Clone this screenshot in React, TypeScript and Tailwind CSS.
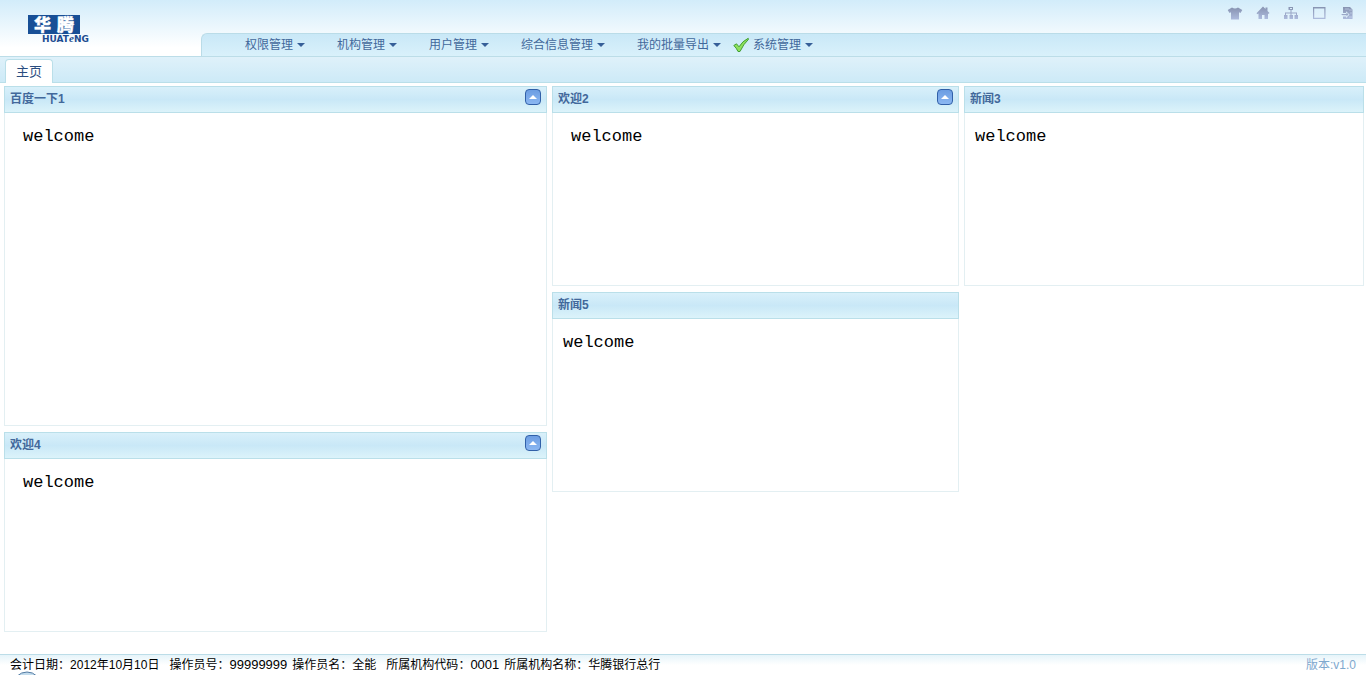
import type { ReactNode } from "react";

const menus = [
  { label: "权限管理" },
  { label: "机构管理" },
  { label: "用户管理" },
  { label: "综合信息管理" },
  { label: "我的批量导出" },
  { label: "系统管理", checked: true },
];

function Logo() {
  return (
    <a href="#" aria-label="华腾 HUATENG" className="ml-7 mt-[15px] block h-7 w-[68px]">
      <svg viewBox="0 0 68 28" className="h-7 w-[68px] overflow-visible" aria-hidden="true">
        <rect x="0" y="0" width="52" height="19" fill="#184f96" />
        <g fontSize="17" fontWeight="900" fill="#fff" stroke="#fff" strokeWidth="0.4" fontFamily="'Noto Sans CJK SC', sans-serif">
          <text x="6" y="15.500">华</text>
          <text x="29" y="15.500">腾</text>
        </g>
        <text x="14" y="26.500" fill="#1d4c91" fontWeight="bold" fontSize="9" fontFamily="'DejaVu Sans', sans-serif">
          HUAT<tspan fontSize="11" fontStyle="italic" fontFamily="'Liberation Serif', serif">e</tspan>NG
        </text>
      </svg>
    </a>
  );
}

function ToolButton({ label, children }: { label: string; children: ReactNode }) {
  return (
    <button type="button" aria-label={label} className="size-4 cursor-pointer">
      <svg viewBox="0 0 16 16" className="size-4" fill="url(#tool)" aria-hidden="true">
        {children}
      </svg>
    </button>
  );
}

function Tools() {
  return (
    <div className="flex gap-3 pr-[11px] pt-[5px]">
      <svg className="absolute size-0" aria-hidden="true">
        <defs>
          <linearGradient id="tool" x1="0" y1="0" x2="0" y2="1">
            <stop offset="0" stopColor="#8793b1" />
            <stop offset="1" stopColor="#adbbdd" />
          </linearGradient>
        </defs>
      </svg>
      <ToolButton label="皮肤">
        <path d="M5 2.500Q8 4.500 11 2.500L15.300 5 13.500 8 12 7.200V14.500H4V7.200L2.500 8 .700 5Z" />
      </ToolButton>
      <ToolButton label="首页">
        <path d="M8 1.500 10.500 4V2.500H12.500V6L14.500 8 13.500 9 13 8.500V14H9.500V10H7V14H3.500V8.500L2.500 9.300 1.500 8.300Z" />
      </ToolButton>
      <ToolButton label="机构">
        <path d="M5.500 2H10V5H8.500V7.500H14V10H15V14H11.500V10H13V8.500H8.500V10H10V14H6.500V10H7.500V8.500H3V10H4.500V14H1V10H2V7.500H7.500V5H5.500ZM7 3V4H9V3Z" fillRule="evenodd" />
      </ToolButton>
      <ToolButton label="全屏">
        <path d="M2 2H14.500V14H2ZM3.200 3.500V12.800H13.300V3.500Z" fillRule="evenodd" />
      </ToolButton>
      <ToolButton label="退出">
        <path d="M4 2H11L13.500 4.500V14H4V11.500H7V13L10.500 9.500 7 6.200V8H4Z" />
        <path d="M2 9H7.500V7.500L9.500 9.600 7.500 11.500V10.300H3.500Z" />
        <path d="M6 4H10M10 5H13M11 8H13M10 12H13" stroke="#d8e7f8" strokeWidth=".5" fill="none" />
      </ToolButton>
    </div>
  );
}

function CheckMark() {
  return (
    <svg viewBox="0 0 16 16" className="size-4" aria-hidden="true">
      <path d="M.800 8.500 3.500 6.800 6 9.800Q9.500 4 15.200 1.300L15.600 2.200Q10.500 7 7 14.500L5 14.500Q3.500 11 .800 8.500Z" fill="#8ee05e" stroke="#379629" strokeWidth=".9" strokeLinejoin="round" />
    </svg>
  );
}

function Panel({ title, size, collapsible, inset }: { title: string; size: "tall" | "short"; collapsible?: boolean; inset?: boolean }) {
  return (
    <section className={`flex flex-col border border-[#e3eff2] ${size === "tall" ? "h-[340px]" : "h-[200px]"}`}>
      <header className="-m-px flex h-[27px] shrink-0 items-start justify-between border border-[#badfe9] bg-linear-to-b from-[#d9f0fa] via-[#c9e8f7] to-[#dcf3fa] pl-[5px] pr-[5px] pt-[2px]">
        <h2 className="text-[12px]/[20px] font-bold text-[#42689b]">{title}</h2>
        {collapsible && (
          <button type="button" aria-label={`折叠 ${title}`} className="flex size-4 cursor-pointer items-center justify-center rounded-[4px] border border-[#3160a8] bg-linear-to-b from-[#6c9de2] to-[#8bb7f2]">
            <svg viewBox="0 0 8 4" className="h-1 w-2" aria-hidden="true">
              <path d="M0 4 4 0 8 4Z" fill="#fff" />
            </svg>
          </button>
        )}
      </header>
      <p className={`pt-[13px] font-['Liberation_Mono',monospace] text-[17px]/[24px] text-black ${inset ? "pl-[18px]" : "pl-[10px]"}`}>welcome</p>
    </section>
  );
}

function Field({ label, value, numeric }: { label: string; value: string; numeric?: boolean }) {
  return (
    <div className={`flex ${numeric ? "pr-[5px]" : "pr-[10px]"}`}>
      <dt>{label}：</dt>
      <dd className={numeric ? "text-[13px]" : ""}>{value}</dd>
    </div>
  );
}

export default function App() {
  return (
    <div className="flex min-h-screen flex-col bg-white font-['Liberation_Sans','Noto_Sans_CJK_SC',sans-serif] text-[12px]">
      <header className="flex h-[57px] border-b border-[#bcdde8] bg-linear-to-b from-[#d2ecfa] to-white to-85%">
        <div className="w-[201px] shrink-0">
          <Logo />
        </div>
        <div className="flex min-w-0 flex-1 flex-col items-end justify-between">
          <Tools />
          <nav className="flex h-[23px] w-full rounded-tl-md border-l border-t border-[#badce8] bg-linear-to-b from-[#c9e8f7] to-[#d9f1fb] pl-[23px]">
            {menus.map((m) => (
              <button type="button" key={m.label} className="flex shrink-0 cursor-pointer items-center pr-3 text-[12px]/[20px] text-[#42689b]">
                <span className="flex w-5">{m.checked && <CheckMark />}</span>
                {m.label}
                <svg viewBox="0 0 8 4" className="ml-1 h-1 w-2" aria-hidden="true">
                  <path d="M0 0H8L4 4Z" fill="#365f98" />
                </svg>
              </button>
            ))}
          </nav>
        </div>
      </header>
      <div role="tablist" className="flex h-[26px] items-end border-b border-[#badfe9] bg-linear-to-b from-[#dff1fa] to-[#cdeaf7] pl-[5px]">
        <button type="button" role="tab" aria-selected="true" className="-mb-px h-6 w-12 cursor-pointer rounded-t-[4px] border border-b-0 border-[#badfe9] bg-white text-[13px]/[22px] text-[#2a4d80]">
          主页
        </button>
      </div>
      <main className="grid flex-1 grid-cols-[543fr_407fr_400fr] items-start gap-[5px] pb-5 pl-1 pr-[2px] pt-[3px]">
        <div className="flex flex-col gap-[6px]">
          <Panel title="百度一下1" size="tall" collapsible inset />
          <Panel title="欢迎4" size="short" collapsible inset />
        </div>
        <div className="flex flex-col gap-[6px]">
          <Panel title="欢迎2" size="short" collapsible inset />
          <Panel title="新闻5" size="short" />
        </div>
        <Panel title="新闻3" size="short" />
      </main>
      <footer className="relative flex h-[21px] justify-between overflow-hidden border-t border-[#bcdde8] bg-linear-to-b from-[#e6f4fa] to-white to-50% pl-[10px] pr-[10px] text-[12px]/[20px] text-black">
        <svg viewBox="0 0 30 30" className="absolute left-3 top-4 size-[30px]" aria-hidden="true">
          <circle cx="15" cy="15" r="14" fill="#c3dced" stroke="#527ba3" />
        </svg>
        <dl className="relative flex">
          <Field label="会计日期" value="2012年10月10日" />
          <Field label="操作员号" value="99999999" numeric />
          <Field label="操作员名" value="全能" />
          <Field label="所属机构代码" value="0001" numeric />
          <Field label="所属机构名称" value="华腾银行总行" />
        </dl>
        <p className="text-[#7ea8ce]">版本:v1.0</p>
      </footer>
    </div>
  );
}
